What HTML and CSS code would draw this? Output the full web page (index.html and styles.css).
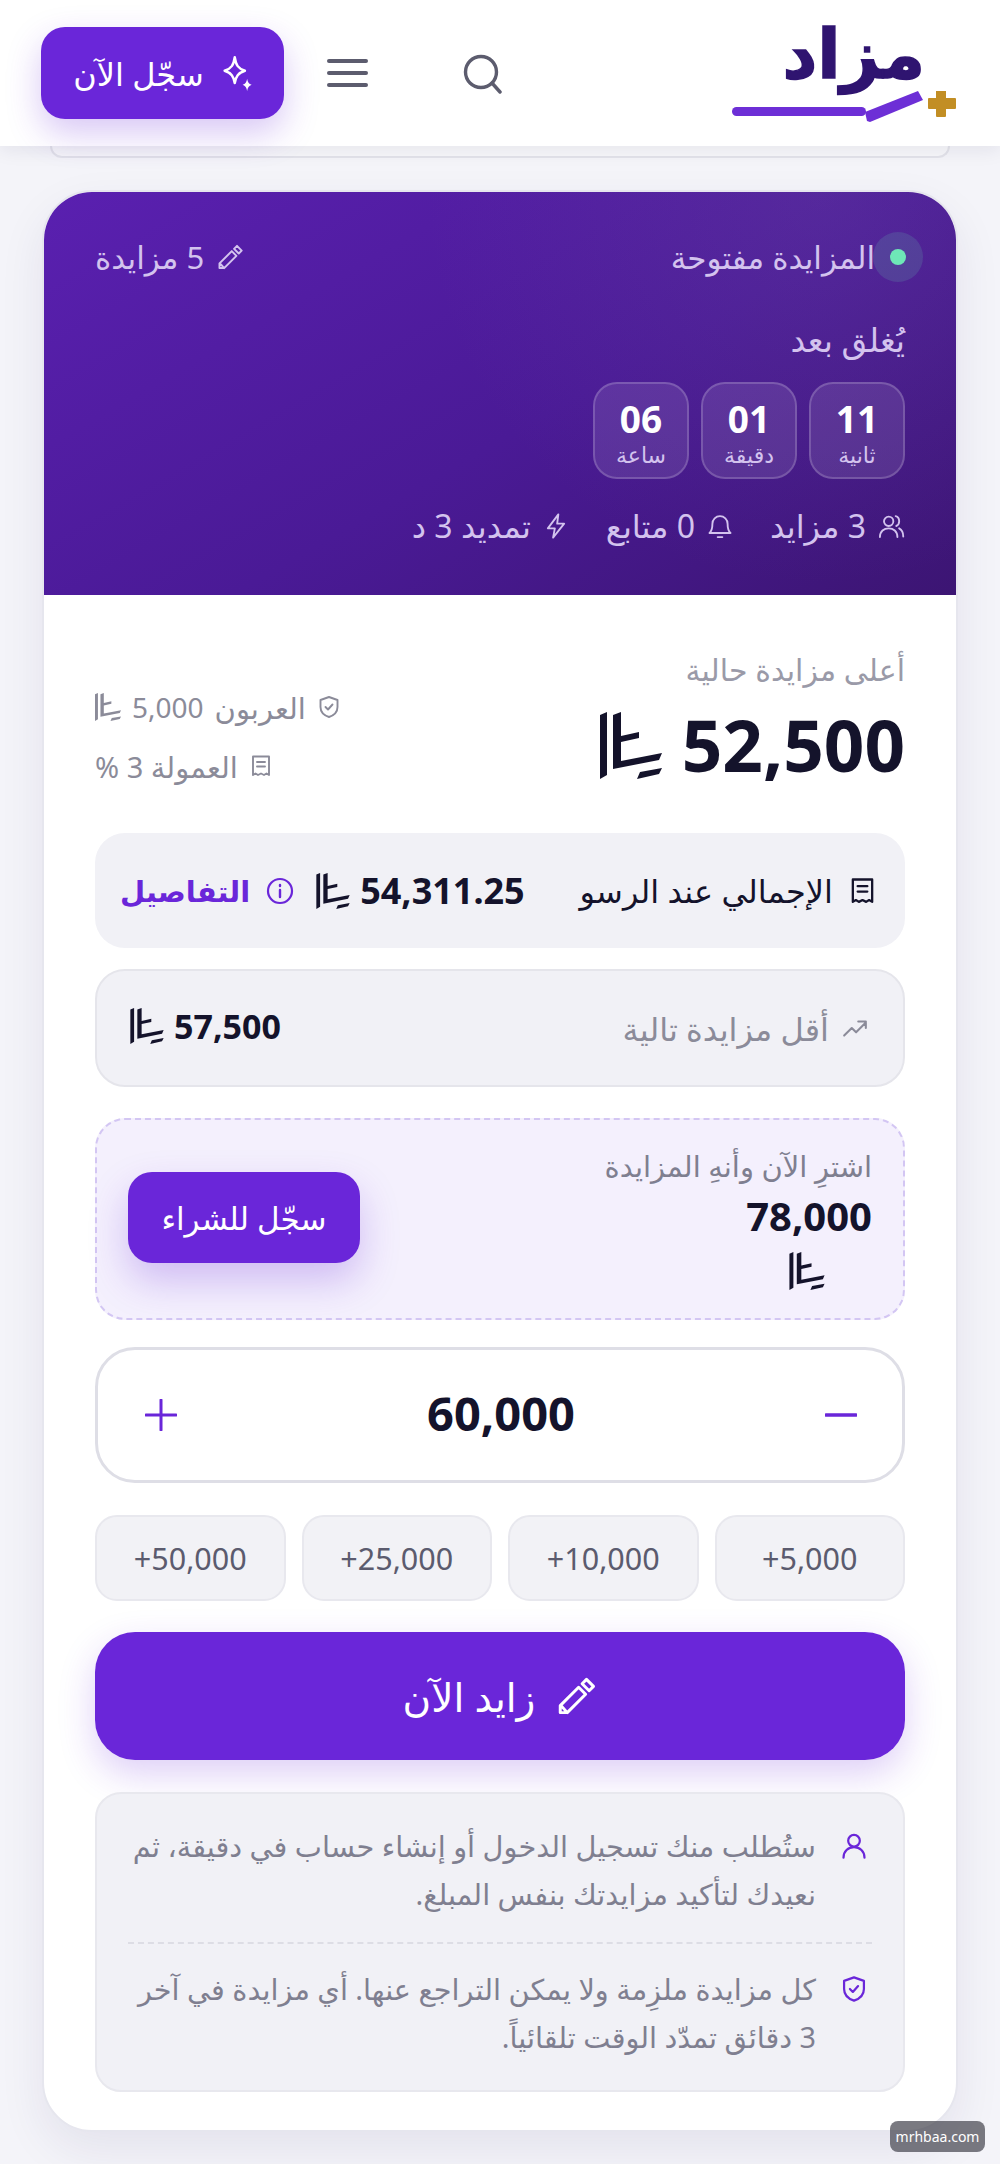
FILE: index.html
```html
<!DOCTYPE html>
<html lang="ar" dir="rtl">
<head>
<meta charset="utf-8">
<title>مزاد</title>
<link rel="stylesheet" href="styles.css">
</head>
<body>
<svg class="defs" width="0" height="0" aria-hidden="true">
  <symbol id="riyal" viewBox="0 0 62 67"><path fill="currentColor" d="M0 3 7 0V63L0 67ZM13 3 21 0V24L39 20V26L21 30V49L62 41 59 48 13 57ZM37 67 40 60 62 56 59 62Z"/></symbol>
  <symbol id="pencil" viewBox="0 0 24 24"><path fill="none" stroke="currentColor" stroke-width="1.7" stroke-linejoin="round" stroke-linecap="round" d="M3 21.5V17.5L13.5 7 17.5 11 7 21.5H3ZM3.5 17.5 7 21.5M15.5 5 18 2.5 22 6.5 19.5 9Z"/></symbol>
  <symbol id="receipt" viewBox="0 0 24 24"><path fill="none" stroke="currentColor" stroke-width="1.9" stroke-linejoin="round" stroke-linecap="round" d="M4 2.5H20V21L17.5 19.5 15 21 12 19.5 9 21 6.5 19.5 4 21ZM8 8H16M8 12.5H16"/></symbol>
  <symbol id="shield" viewBox="0 0 24 24"><path fill="none" stroke="currentColor" stroke-width="1.9" stroke-linejoin="round" stroke-linecap="round" d="M12 2 20.5 5V12C20.5 17 16.5 20.5 12 22 7.500 20.500 3.500 17 3.500 12V5ZM8.500 12 11 14.500 15.500 9.500"/></symbol>
  <symbol id="user" viewBox="0 0 24 24"><path fill="none" stroke="currentColor" stroke-width="1.9" stroke-linecap="round" d="M12 2.500A5 5 0 1 0 12.010 12.500 5 5 0 0 0 12 2.500ZM3 22C3 16.500 7 13 12 13S21 16.500 21 22"/></symbol>
</svg>

<header class="topbar">
  <button class="btn btn-head">
    <svg class="sparkle" viewBox="0 0 26 32"><path fill="none" stroke="currentColor" stroke-width="2.200" stroke-linejoin="round" d="M11 2C12 9 14 12 20 14 14 16 12 19 11 25 10 19 8 16 2 14 8 12 10 9 11 2Z"/><path fill="currentColor" d="M22 21C22.500 24 23.500 25.500 26 26.500 23.500 27.500 22.500 29 22 32 21.500 29 20.500 27.500 18 26.500 20.500 25.500 21.500 24 22 21Z"/></svg>
    <span>سجّل الآن</span>
  </button>
  <div class="burger"><i></i><i></i><i></i></div>
  <svg class="search" viewBox="0 0 40 40"><circle cx="18" cy="18" r="15.500" fill="none" stroke="currentColor" stroke-width="3.400"/><path d="M29 29 37 38" stroke="currentColor" stroke-width="3.400" stroke-linecap="round"/></svg>
  <div class="logo">
    <span class="logo-word">مزاد</span>
    <svg class="logo-mark" viewBox="0 0 224 32"><rect x="0" y="16" width="134" height="9" rx="4.500" fill="#6d2fd6"/><path d="M133 21 186 0 191 9 138 31 135 30Z" fill="#6d2fd6"/><path d="M205 0H213V8H223V17H213V25H205V17H197V8H205Z" fill="#c28e24" stroke="#c28e24" stroke-linejoin="round" stroke-width="2"/></svg>
  </div>
</header>

<div class="peek"></div>

<main class="card">
  <section class="hero">
    <div class="status-row">
      <div class="status"><span class="dot"></span><span>المزايدة مفتوحة</span></div>
      <div class="bids"><svg class="ic-hero"><use href="#pencil"/></svg><span>5 مزايدة</span></div>
    </div>
    <p class="closes">يُغلق بعد</p>
    <div class="timer">
      <div class="tbox"><b>11</b><span>ثانية</span></div>
      <div class="tbox"><b>01</b><span>دقيقة</span></div>
      <div class="tbox"><b>06</b><span>ساعة</span></div>
    </div>
    <div class="stats">
      <div class="stat"><svg class="ic-hero" viewBox="0 0 24 24"><path fill="none" stroke="currentColor" stroke-width="1.600" stroke-linecap="round" d="M10 4A4 4 0 1 0 10.010 12 4 4 0 0 0 10 4ZM2.500 21.500C2.500 16.500 6 14 10 14S17.500 16.500 17.500 21.500M16 3.500C18 4 19 6 19 8S18 11.500 16.500 12M19 14C21 15 22.500 17.500 22.500 21"/></svg><span>3 مزايد</span></div>
      <div class="stat"><svg class="ic-hero" viewBox="0 0 24 24"><path fill="none" stroke="currentColor" stroke-width="1.600" stroke-linecap="round" stroke-linejoin="round" d="M3 18H21C19 16 18.500 14 18.500 10A6.500 6.500 0 0 0 5.500 10C5.500 14 5 16 3 18ZM10 21.500H14"/></svg><span>0 متابع</span></div>
      <div class="stat"><svg class="ic-hero" viewBox="0 0 24 24"><path fill="none" stroke="currentColor" stroke-width="1.600" stroke-linejoin="round" d="M14 2 5 14H11L9.500 22 19 10H13Z"/></svg><span>تمديد 3 د</span></div>
    </div>
  </section>

  <section class="content">
    <div class="price-row">
      <div class="price-main">
        <p class="price-label">أعلى مزايدة حالية</p>
        <div class="price"><span>52,500</span><svg class="riyal-lg"><use href="#riyal"/></svg></div>
      </div>
      <div class="price-side">
        <div class="side-line"><svg class="ic-22"><use href="#shield"/></svg><span>العربون</span><span class="num">5,000</span><svg class="riyal-sm"><use href="#riyal"/></svg></div>
        <div class="side-line"><svg class="ic-22"><use href="#receipt"/></svg><span>العمولة 3 %</span></div>
      </div>
    </div>

    <div class="panel total">
      <div class="total-label"><svg class="ic-26"><use href="#receipt"/></svg><span>الإجمالي عند الرسو</span></div>
      <div class="total-value">
        <b>54,311.25</b><svg class="riyal-md"><use href="#riyal"/></svg>
        <svg class="info" viewBox="0 0 28 28"><circle cx="14" cy="14" r="12" fill="none" stroke="currentColor" stroke-width="2.200"/><path d="M14 13V20M14 8V9" stroke="currentColor" stroke-width="2.400" stroke-linecap="round"/></svg>
        <a class="details">التفاصيل</a>
      </div>
    </div>

    <div class="panel next">
      <div class="next-label"><svg class="ic-trend" viewBox="0 0 24 24"><path fill="none" stroke="currentColor" stroke-width="1.900" stroke-linecap="round" stroke-linejoin="round" d="M2 19 9 12 13 16 22 7M15 6H22V12"/></svg><span>أقل مزايدة تالية</span></div>
      <div class="next-value"><b>57,500</b><svg class="riyal-md"><use href="#riyal"/></svg></div>
    </div>

    <div class="buy">
      <div class="buy-info">
        <p>اشترِ الآن وأنهِ المزايدة</p>
        <b>78,000</b>
        <svg class="riyal-buy"><use href="#riyal"/></svg>
      </div>
      <button class="btn btn-buy">سجّل للشراء</button>
    </div>

    <div class="stepper">
      <svg class="step" viewBox="0 0 32 32"><path d="M1 16H31" stroke="currentColor" stroke-width="3.400" stroke-linecap="round"/></svg>
      <b>60,000</b>
      <svg class="step" viewBox="0 0 32 32"><path d="M1 16H31M16 1V31" stroke="currentColor" stroke-width="3" stroke-linecap="round"/></svg>
    </div>

    <div class="chips">
      <button class="chip" dir="ltr">+5,000</button>
      <button class="chip" dir="ltr">+10,000</button>
      <button class="chip" dir="ltr">+25,000</button>
      <button class="chip" dir="ltr">+50,000</button>
    </div>

    <button class="btn btn-bid"><svg class="ic-bid"><use href="#pencil"/></svg><span>زايد الآن</span></button>

    <div class="notes">
      <div class="note"><svg class="ic-note"><use href="#user"/></svg><p>ستُطلب منك تسجيل الدخول أو إنشاء حساب في دقيقة، ثم نعيدك لتأكيد مزايدتك بنفس المبلغ.</p></div>
      <div class="note note-second"><svg class="ic-note"><use href="#shield"/></svg><p>كل مزايدة ملزِمة ولا يمكن التراجع عنها. أي مزايدة في آخر 3 دقائق تمدّد الوقت تلقائياً.</p></div>
    </div>
  </section>
</main>

<div class="watermark" dir="ltr">mrhbaa.com</div>
</body>
</html>
```
FILE: styles.css
```css
* { box-sizing: border-box; }
html, body { margin: 0; padding: 0; }
body {
  height: 2164px;
  overflow: hidden;
  position: relative;
  background: #f4f4f9;
  color: #14132b;
  font-family: "Noto Sans", "DejaVu Sans", sans-serif;
}
p { margin: 0; }
.defs { position: absolute; }
button { font-family: inherit; border: 0; cursor: pointer; }
.btn { background: #6a26d9; color: #fff; display: flex; align-items: center; justify-content: center; }

/* top bar */
.topbar {
  height: 146px;
  background: #fff;
  display: flex;
  flex-direction: row-reverse;
  align-items: center;
  padding: 0 44px 0 41px;
  box-shadow: 0 4px 18px rgba(30, 25, 70, .08);
  position: relative;
}
.logo { margin-left: auto; width: 224px; height: 128px; display: flex; flex-direction: column; align-items: flex-start; }
.logo-word { font-size: 68px; line-height: 80px; font-weight: 700; color: #2f1470; margin: 3px 31px 0 0; -webkit-text-stroke: 1.5px #2f1470; }
.logo-mark { width: 224px; height: 32px; margin-top: -1px; }
.search { width: 40px; height: 40px; color: #5c5c6e; margin-left: 95px; margin-top: 2px; }
.burger { width: 41px; display: flex; flex-direction: column; gap: 8px; margin-left: 43px; }
.burger i { display: block; height: 4px; border-radius: 2px; background: #5c5c6e; }
.btn-head { width: 243px; height: 92px; border-radius: 24px; gap: 18px; font-size: 32px; box-shadow: 0 14px 34px rgba(106, 38, 217, .26); }
.sparkle { width: 30px; height: 36px; }

.peek { height: 12px; margin: 0 50px; background: #f7f7fa; border: 2px solid #e3e3ea; border-top: 0; border-radius: 0 0 22px 22px; }

/* card */
.card {
  margin: 32px 42px 0;
  height: 1942px;
  background: #fff;
  border: 2px solid #e6e6ee;
  border-radius: 50px;
  box-shadow: 0 18px 46px rgba(40, 30, 90, .08);
  overflow: hidden;
}
.hero {
  height: 403px;
  padding: 39px 51px 0;
  color: #d3c3ee;
  background: radial-gradient(circle at 85% 0, rgba(120, 90, 170, .22), transparent 45%), linear-gradient(150deg, #5a20b0 0%, #4a1a96 55%, #3c1573 100%);
}
.status-row { display: flex; justify-content: space-between; align-items: center; height: 52px; font-size: 31px; }
.status { display: flex; align-items: center; gap: 0; margin-right: -18px; }
.status span:last-child { margin-right: -2px; }
.dot { width: 50px; height: 50px; border-radius: 50%; background: rgba(110, 231, 183, .15); position: relative; flex: none; }
.dot::after { content: ""; position: absolute; inset: 17px; border-radius: 50%; background: #6ee7b7; }
.bids { display: flex; align-items: center; gap: 12px; }
.ic-hero { width: 28px; height: 28px; flex: none; }
.ic-22 { width: 24px; height: 26px; flex: none; }
.ic-trend { width: 28px; height: 26px; flex: none; }
.closes { font-size: 33px; line-height: 36px; margin-top: 39px; }
.timer { display: flex; gap: 12px; margin-top: 24px; }
.tbox {
  width: 96px; height: 97px;
  border-radius: 24px;
  background: rgba(255,255,255,.1);
  border: 2px solid rgba(255,255,255,.18);
  display: flex; flex-direction: column; align-items: center; justify-content: center;
}
.tbox b { color: #fff; font-size: 37px; line-height: 44px; margin-top: 2px; }
.tbox span { font-size: 22px; line-height: 26px; }
.stats { display: flex; gap: 36px; margin-top: 25px; font-size: 32px; align-items: center; }
.stat { display: flex; align-items: center; gap: 11px; }

/* content */
.content { padding: 0 51px; }
.price-row { height: 238px; display: flex; justify-content: space-between; align-items: flex-start; padding-top: 55px; }
.price-label { font-size: 30px; line-height: 40px; color: #9a9aa8; }
.price { display: flex; align-items: center; gap: 20px; font-size: 71px; line-height: 90px; font-weight: 700; margin-top: 10px; }
.riyal-lg { width: 62px; height: 67px; }
.price-side { color: #8b8b99; font-size: 29px; padding-top: 38px; display: flex; flex-direction: column; align-items: flex-end; gap: 21px; }
.side-line { display: flex; align-items: center; gap: 11px; height: 38px; }
.num { font-size: 28px; }
.riyal-sm { width: 26px; height: 30px; }
.panel { background: #f1f1f6; border-radius: 30px; display: flex; align-items: center; justify-content: space-between; }
.total { height: 115px; padding: 0 28px 0 25px; }
.total-label { display: flex; align-items: center; gap: 15px; font-size: 32px; }
.ic-26 { width: 29px; height: 32px; flex: none; }
.total-value { display: flex; align-items: center; gap: 10px; }
.total-value b { font-size: 36px; }
.next-value b { font-size: 34px; }
.riyal-md { width: 34px; height: 36px; }
.info { width: 28px; height: 28px; color: #6a26d9; margin-right: 12px; }
.details { color: #6a26d9; font-weight: 700; font-size: 29px; margin-right: 6px; }
.next { height: 118px; margin-top: 21px; padding: 0 34px 0 33px; border: 2px solid #e5e5eb; }
.next-label { display: flex; align-items: center; gap: 12px; color: #8b8b99; font-size: 32px; }
.next-value { display: flex; align-items: center; gap: 10px; padding-bottom: 4px; }
.buy {
  height: 202px; margin-top: 31px;
  background: #f4f0fd;
  border: 2px dashed #d3c6f3;
  border-radius: 30px;
  padding: 0 31px 0 32px;
  display: flex; align-items: center; justify-content: space-between;
}
.buy-info { display: flex; flex-direction: column; align-items: flex-start; padding-bottom: 2px; }
.buy-info p { color: #7f7f90; font-size: 29px; line-height: 40px; }
.buy-info b { font-size: 40px; line-height: 60px; align-self: flex-start; }
.riyal-buy { width: 36px; height: 38px; margin-right: 47px; margin-top: 6px; }
.btn-buy { width: 232px; height: 91px; border-radius: 24px; font-size: 31px; margin-left: -1px; margin-bottom: 3px; box-shadow: 0 18px 38px rgba(106, 38, 217, .26); }
.stepper {
  height: 136px; margin-top: 27px;
  border: 3px solid #dedee6;
  border-radius: 40px;
  background: #fff;
  padding: 0 45px 0 47px;
  display: flex; align-items: center; justify-content: space-between;
}
.stepper b { font-size: 47px; padding-bottom: 4px; }
.step { width: 32px; height: 32px; color: #6a26d9; }
.chips { display: grid; grid-template-columns: repeat(4, 1fr); gap: 16px; margin-top: 32px; }
.chip { height: 86px; border-radius: 22px; background: #f2f2f6; border: 2px solid #e8e8ee; color: #5b5b6e; font-size: 30.5px; }
.btn-bid { width: 100%; height: 128px; margin-top: 31px; border-radius: 40px; gap: 20px; font-size: 39px; box-shadow: 0 14px 36px rgba(106, 38, 217, .22); }
.ic-bid { width: 42px; height: 42px; }
.notes { height: 300px; margin-top: 32px; background: #f1f1f6; border: 2px solid #e8e8ee; border-radius: 26px; padding: 0 31px; }
.note { display: flex; gap: 24px; height: 148px; padding-top: 28px; }
.note-second { border-top: 2px dashed #dddde5; padding-top: 21px; }
.ic-note { width: 28px; height: 30px; color: #6a26d9; flex: none; margin: 9px 4px 0 0; }
.note p { color: #7f7f90; font-size: 28.8px; line-height: 48px; }

.watermark {
  position: absolute; left: 890px; top: 2121px;
  width: 95px; height: 31px;
  border-radius: 8px;
  background: rgba(70, 70, 80, .72);
  color: #fff;
  font-size: 14px;
  display: flex; align-items: center; justify-content: center;
}
```
